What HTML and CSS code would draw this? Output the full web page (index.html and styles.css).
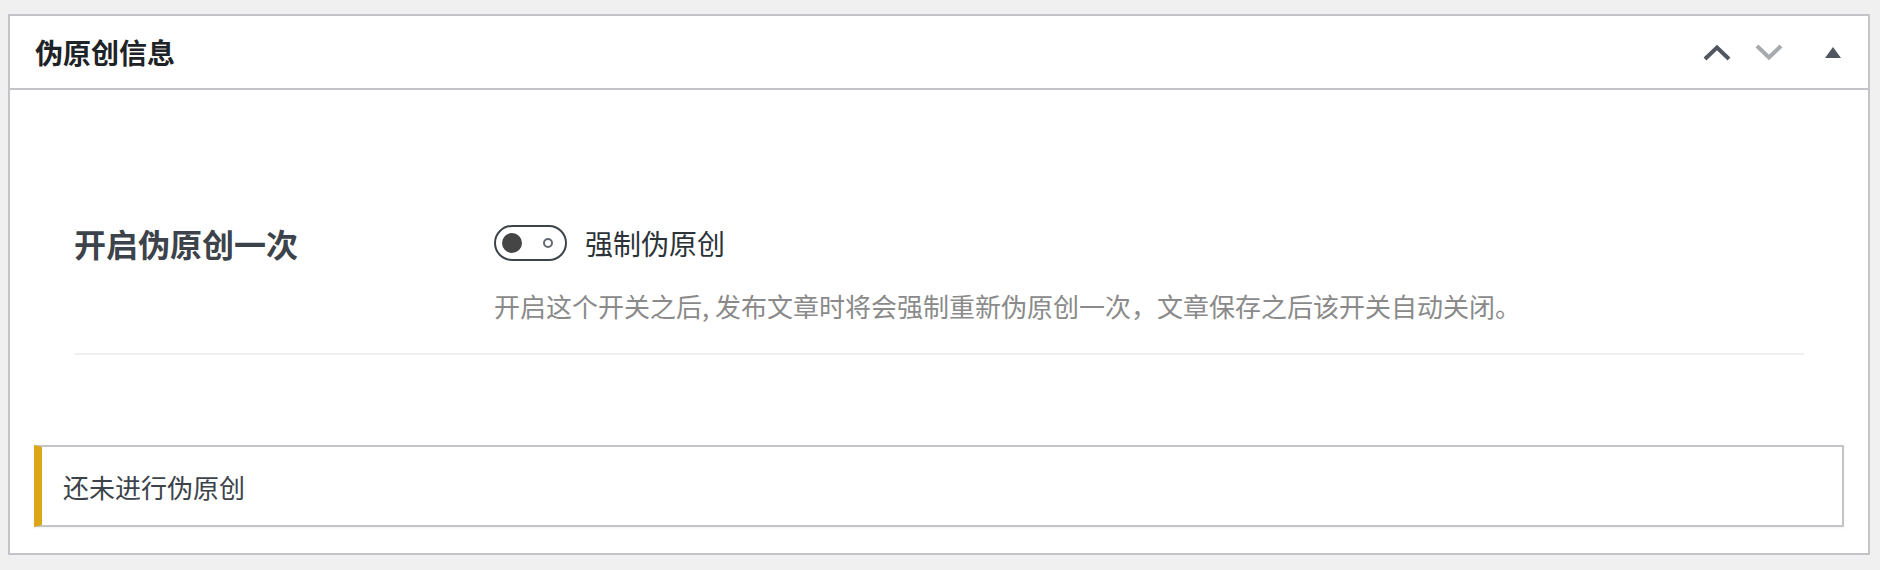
FILE: index.html
```html
<!DOCTYPE html>
<html lang="zh-CN">
<head>
<meta charset="utf-8">
<title>伪原创信息</title>
<link rel="stylesheet" href="styles.css">
</head>
<body>
<div class="postbox">
  <div class="postbox-header">
    <h2 class="hndle">伪原创信息</h2>
    <div class="handle-actions">
      <button class="handle-btn up" aria-label="上移">
        <svg width="28" height="17" viewBox="0 0 28 17"><path d="M2 15 L14 3.5 L26 15" fill="none" stroke="currentColor" stroke-width="4"/></svg>
      </button>
      <button class="handle-btn down" aria-label="下移">
        <svg width="28" height="17" viewBox="0 0 28 17"><path d="M2 2 L14 13.5 L26 2" fill="none" stroke="currentColor" stroke-width="4"/></svg>
      </button>
      <button class="handle-btn toggle-arrow" aria-label="切换面板">
        <svg width="16" height="11" viewBox="0 0 16 11"><path d="M8 0 L16 11 L0 11 Z" fill="currentColor"/></svg>
      </button>
    </div>
  </div>
  <div class="inside">
    <div class="form-wrap">
      <div class="form-row">
        <div class="form-label">开启伪原创一次</div>
        <div class="form-field">
          <label class="switch-line">
            <span class="switch"><span class="knob"></span><span class="ring"></span></span>
            <span class="switch-text">强制伪原创</span>
          </label>
          <p class="description">开启这个开关之后, 发布文章时将会强制重新伪原创一次，文章保存之后该开关自动关闭。</p>
        </div>
      </div>
    </div>
    <div class="notice">还未进行伪原创</div>
  </div>
</div>
</body>
</html>
```

FILE: styles.css
```css
* { box-sizing: border-box; }

html, body {
  margin: 0;
  padding: 0;
  background: #f0f0f1;
  font-family: "Noto Sans CJK SC", "Noto Sans", sans-serif;
  color: #3c434a;
}

body {
  padding: 14px 10px 0 8px;
}

.postbox {
  background: #fff;
  border: 2px solid #c3c4c7;
  height: 541px;
  display: flex;
  flex-direction: column;
}

.postbox-header {
  height: 74px;
  border-bottom: 2px solid #c3c4c7;
  display: flex;
  align-items: center;
  justify-content: space-between;
  padding: 0 27px 0 25px;
}

.hndle {
  margin: 0;
  font-size: 28px;
  font-weight: 700;
  color: #1d2327;
  line-height: 1;
}

.handle-actions {
  display: flex;
  align-items: center;
}

.handle-btn {
  border: 0;
  background: none;
  padding: 0;
  margin: 0;
  display: flex;
  align-items: center;
  cursor: pointer;
}

.handle-btn.up { color: #50575e; margin-right: 24px; }
.handle-btn.down { color: #a7aaad; margin-right: 42px; }
.handle-btn.toggle-arrow { color: #50575e; }

.inside {
  flex: 1;
  padding: 0 24px 0 24px;
}

.form-wrap {
  margin: 0 40px;
  border-bottom: 2px solid #f0f0f1;
  padding: 135px 0 29px;
}

.form-row {
  display: flex;
}

.form-label {
  width: 420px;
  flex: none;
  font-size: 32px;
  font-weight: 700;
  color: #3c434a;
  line-height: 36px;
}

.form-field {
  flex: 1;
}

.switch-line {
  display: flex;
  align-items: center;
  height: 36px;
}

.switch {
  width: 73px;
  height: 36px;
  border: 2px solid #3c434a;
  border-radius: 18px;
  display: flex;
  align-items: center;
  justify-content: space-between;
  padding: 0 12px 0 6px;
  flex: none;
}

.knob {
  width: 20px;
  height: 20px;
  border-radius: 50%;
  background: #454545;
}

.ring {
  width: 10px;
  height: 10px;
  border-radius: 50%;
  border: 2.5px solid #646970;
}

.switch-text {
  margin-left: 18px;
  font-size: 28px;
  color: #2c3338;
  line-height: 36px;
}

.description {
  margin: 27px 0 0;
  font-size: 26px;
  line-height: 36px;
  color: #8a8a8a;
}

.notice {
  margin-top: 90px;
  height: 82px;
  border: 2px solid #c3c4c7;
  border-left: 8px solid #dba617;
  box-shadow: 0 1px 2px rgba(0,0,0,0.06);
  padding: 0 0 0 21px;
  display: flex;
  align-items: center;
  font-size: 26px;
  color: #3c434a;
}
```
